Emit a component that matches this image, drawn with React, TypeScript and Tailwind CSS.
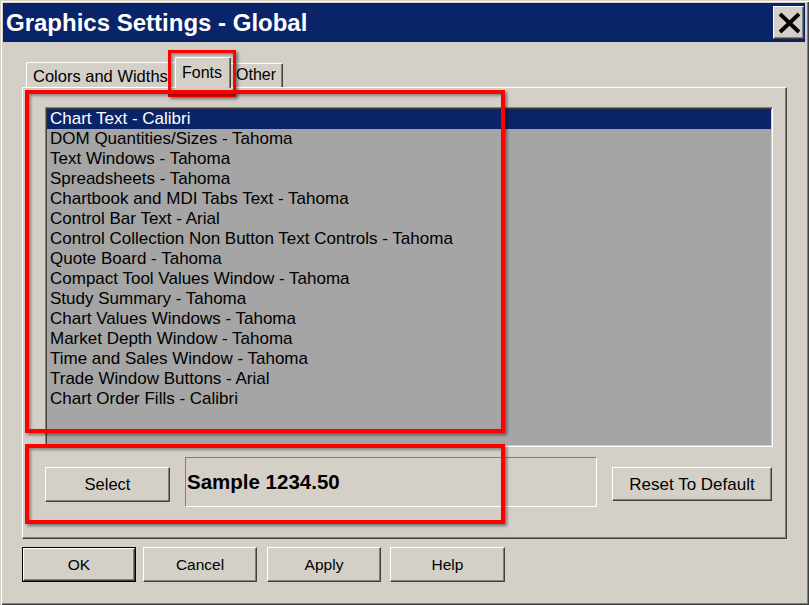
import React from 'react';

const FONT_ITEMS = [
  'Chart Text - Calibri',
  'DOM Quantities/Sizes - Tahoma',
  'Text Windows - Tahoma',
  'Spreadsheets - Tahoma',
  'Chartbook and MDI Tabs Text - Tahoma',
  'Control Bar Text - Arial',
  'Control Collection Non Button Text Controls - Tahoma',
  'Quote Board - Tahoma',
  'Compact Tool Values Window - Tahoma',
  'Study Summary - Tahoma',
  'Chart Values Windows - Tahoma',
  'Market Depth Window - Tahoma',
  'Time and Sales Window - Tahoma',
  'Trade Window Buttons - Arial',
  'Chart Order Fills - Calibri',
];

// classic raised 3D button look
const raised =
  'bg-[#d4d0c8] border-t border-l border-t-white border-l-white border-b border-r border-b-[#404040] border-r-[#404040] shadow-[inset_-1px_-1px_0_#808080]';

function Button({ label, className = '', textSize = 'text-[15px]' }: { label: string; className?: string; textSize?: string }) {
  return (
    <button className={`${raised} ${textSize} flex items-center justify-center leading-none text-black ${className}`}>
      {label}
    </button>
  );
}

function Annotation({ className }: { className: string }) {
  return (
    <div
      className={`absolute pointer-events-none border-[#ff0000] shadow-[2px_2px_3px_rgba(0,0,0,0.45),inset_2px_2px_3px_rgba(0,0,0,0.35)] ${className}`}
    />
  );
}

export default function App() {
  return (
    <div className="relative w-[809px] h-[605px] overflow-hidden bg-[#d4d0c8] font-['Liberation_Sans',Arial,sans-serif] text-black shadow-[inset_1px_1px_0_#d4d0c8,inset_2px_2px_0_#ffffff,inset_-1px_-1px_0_#404040,inset_-2px_-2px_0_#808080]">
      {/* Title bar */}
      <div className="mt-[3px] ml-[3px] mr-[4px] h-[39px] bg-[#0a246a] flex items-center justify-between pl-[3px] pr-px">
        <span className="text-white font-bold text-[24px] leading-none">Graphics Settings - Global</span>
        <button className={`${raised} w-[31px] h-[33px] flex items-center justify-center`}>
          <svg width="29" height="31" viewBox="0 0 29 31">
            <line x1="6" y1="7" x2="25" y2="25" stroke="#000" strokeWidth="3.8" />
            <line x1="25" y1="7" x2="6" y2="25" stroke="#000" strokeWidth="3.8" />
          </svg>
        </button>
      </div>

      {/* Tabs */}
      <div className="mt-[15px] ml-[26px] h-[30px] flex items-end">
        <div className="w-[149px] h-[25px] pl-[6px] pt-[4px] border-t border-l border-white rounded-tl-[2px] text-[16.5px] leading-[18px] whitespace-nowrap overflow-hidden">
          Colors and Widths
        </div>
        <div className="relative z-10 w-[56px] h-[31px] -mb-px bg-[#d4d0c8] pl-[6px] pt-[6px] border-t border-l border-r border-t-white border-l-white border-r-[#404040] rounded-t-[2px] shadow-[inset_-1px_0_0_#808080] text-[16px] leading-[18px]">
          Fonts
        </div>
        <div className="w-[52px] h-[24px] pl-[5px] pt-[2px] border-t border-r border-t-white border-r-[#404040] rounded-tr-[2px] shadow-[inset_-1px_0_0_#808080] text-[16px] leading-[18px]">
          Other
        </div>
      </div>

      {/* Tab panel */}
      <div className="ml-[22px] w-[765px] h-[452px] pl-[22px] pt-[19px] border-t border-l border-t-white border-l-white border-b border-r border-b-[#404040] border-r-[#404040] shadow-[inset_-1px_-1px_0_#808080]">
        {/* List box */}
        <div className="w-[728px] h-[340px] bg-[#a5a5a5] pt-px border-t border-l border-t-[#808080] border-l-[#808080] border-b border-r border-b-white border-r-white shadow-[inset_1px_1px_0_#404040,inset_-1px_-1px_0_#d4d0c8]">
          {FONT_ITEMS.map((item, i) => (
            <div
              key={item}
              className={`mx-px h-[20px] pl-[3px] text-[17px] leading-[20px] whitespace-nowrap ${
                i === 0 ? 'bg-[#0a246a] text-white' : 'text-black'
              }`}
            >
              {item}
            </div>
          ))}
        </div>

        {/* Select / sample / reset */}
        <div className="mt-[10px] flex items-start">
          <Button label="Select" className="mt-[10px] w-[125px] h-[35px]" textSize="text-[16.5px]" />
          <div className="ml-[15px] w-[412px] h-[50px] flex items-center pl-px border-t border-l border-t-[#808080] border-l-[#808080] border-b border-r border-b-white border-r-white">
            <span className="font-bold text-[20.5px]">Sample 1234.50</span>
          </div>
          <Button label="Reset To Default" className="ml-[15px] mt-[10px] w-[160px] h-[34px]" textSize="text-[17px]" />
        </div>
      </div>

      {/* Dialog buttons */}
      <div className="mt-[8px] ml-[22px] flex">
        <div className="border border-black">
          <Button label="OK" className="w-[112px] h-[33px]" textSize="text-[15.5px]" />
        </div>
        <Button label="Cancel" className="ml-[7px] w-[114px] h-[35px]" textSize="text-[15.5px]" />
        <Button label="Apply" className="ml-[10px] w-[114px] h-[35px]" textSize="text-[15.5px]" />
        <Button label="Help" className="ml-[9px] w-[115px] h-[35px]" textSize="text-[15.5px]" />
      </div>

      {/* Red annotation boxes */}
      <Annotation className="left-[168px] top-[50px] w-[68px] h-[47px] border-[3px]" />
      <Annotation className="left-[25px] top-[90px] w-[480px] h-[343px] border-4" />
      <Annotation className="left-[25px] top-[444px] w-[480px] h-[80px] border-4" />
    </div>
  );
}
